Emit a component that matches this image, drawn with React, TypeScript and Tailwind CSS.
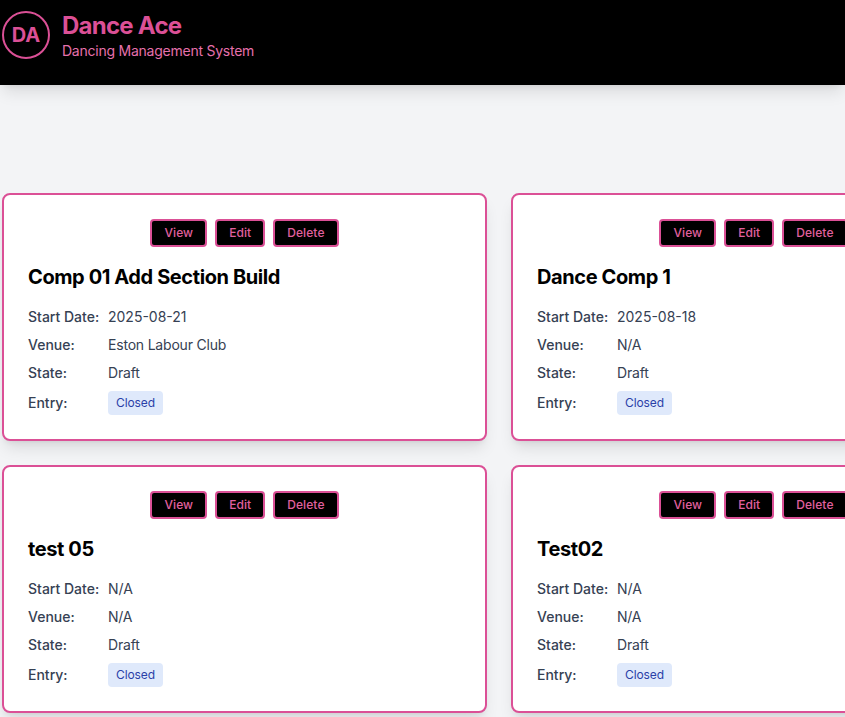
const comps = [
  { name: 'Comp 01 Add Section Build', date: '2025-08-21', venue: 'Eston Labour Club' },
  { name: 'Dance Comp 1', date: '2025-08-18', venue: 'N/A' },
  { name: 'test 05', date: 'N/A', venue: 'N/A' },
  { name: 'Test02', date: 'N/A', venue: 'N/A' },
];

function Row({ label, children }: { label: string; children: React.ReactNode }) {
  return (
    <div className="flex items-center text-sm text-gray-700">
      <span className="w-20 font-medium">{label}</span>
      {children}
    </div>
  );
}

function Card({ name, date, venue }: { name: string; date: string; venue: string }) {
  return (
    <div className="rounded-lg border-2 border-[#db5096] bg-white p-6 shadow-lg">
      <div className="mb-4 flex justify-center gap-2">
        {['View', 'Edit', 'Delete'].map((action) => (
          <button
            key={action}
            className="h-7 rounded border-2 border-[#db5096] bg-black px-3 text-xs font-medium tracking-[0.08px] text-[#e0609f]"
          >
            {action}
          </button>
        ))}
      </div>
      <h2 className="mb-4 text-xl font-bold tracking-[-0.4px] text-black">{name}</h2>
      <div className="flex flex-col gap-2">
        <Row label="Start Date:">{date}</Row>
        <Row label="Venue:">
          <span className="tracking-[-0.2px]">{venue}</span>
        </Row>
        <Row label="State:">
          <span className="tracking-[-0.2px]">Draft</span>
        </Row>
        <Row label="Entry:">
          <span className="rounded bg-[#dfe9fb] px-2 py-1 text-xs tracking-[-0.1px] text-[#2a3fa8]">
            Closed
          </span>
        </Row>
      </div>
    </div>
  );
}

export default function App() {
  return (
    <div className="h-[717px] overflow-hidden bg-[#f3f4f6] font-['Inter',sans-serif]">
      <header className="relative flex h-[85px] items-start gap-3 bg-black pl-0.5 pt-[11px] shadow-lg">
        <div className="flex h-12 w-12 items-center justify-center rounded-full border-2 border-[#db5096] text-xl font-bold text-[#db5096]">
          DA
        </div>
        <div className="-mt-px">
          <h1 className="text-2xl font-bold tracking-[-0.75px] text-[#db5096]">Dance Ace</h1>
          <p className="-mt-px text-sm tracking-[-0.24px] text-[#e670ac]">Dancing Management System</p>
        </div>
      </header>
      <main className="grid w-max grid-cols-[485px_485px] gap-6 pl-0.5 pt-[108px]">
        {comps.map((comp) => (
          <Card key={comp.name} {...comp} />
        ))}
      </main>
    </div>
  );
}
